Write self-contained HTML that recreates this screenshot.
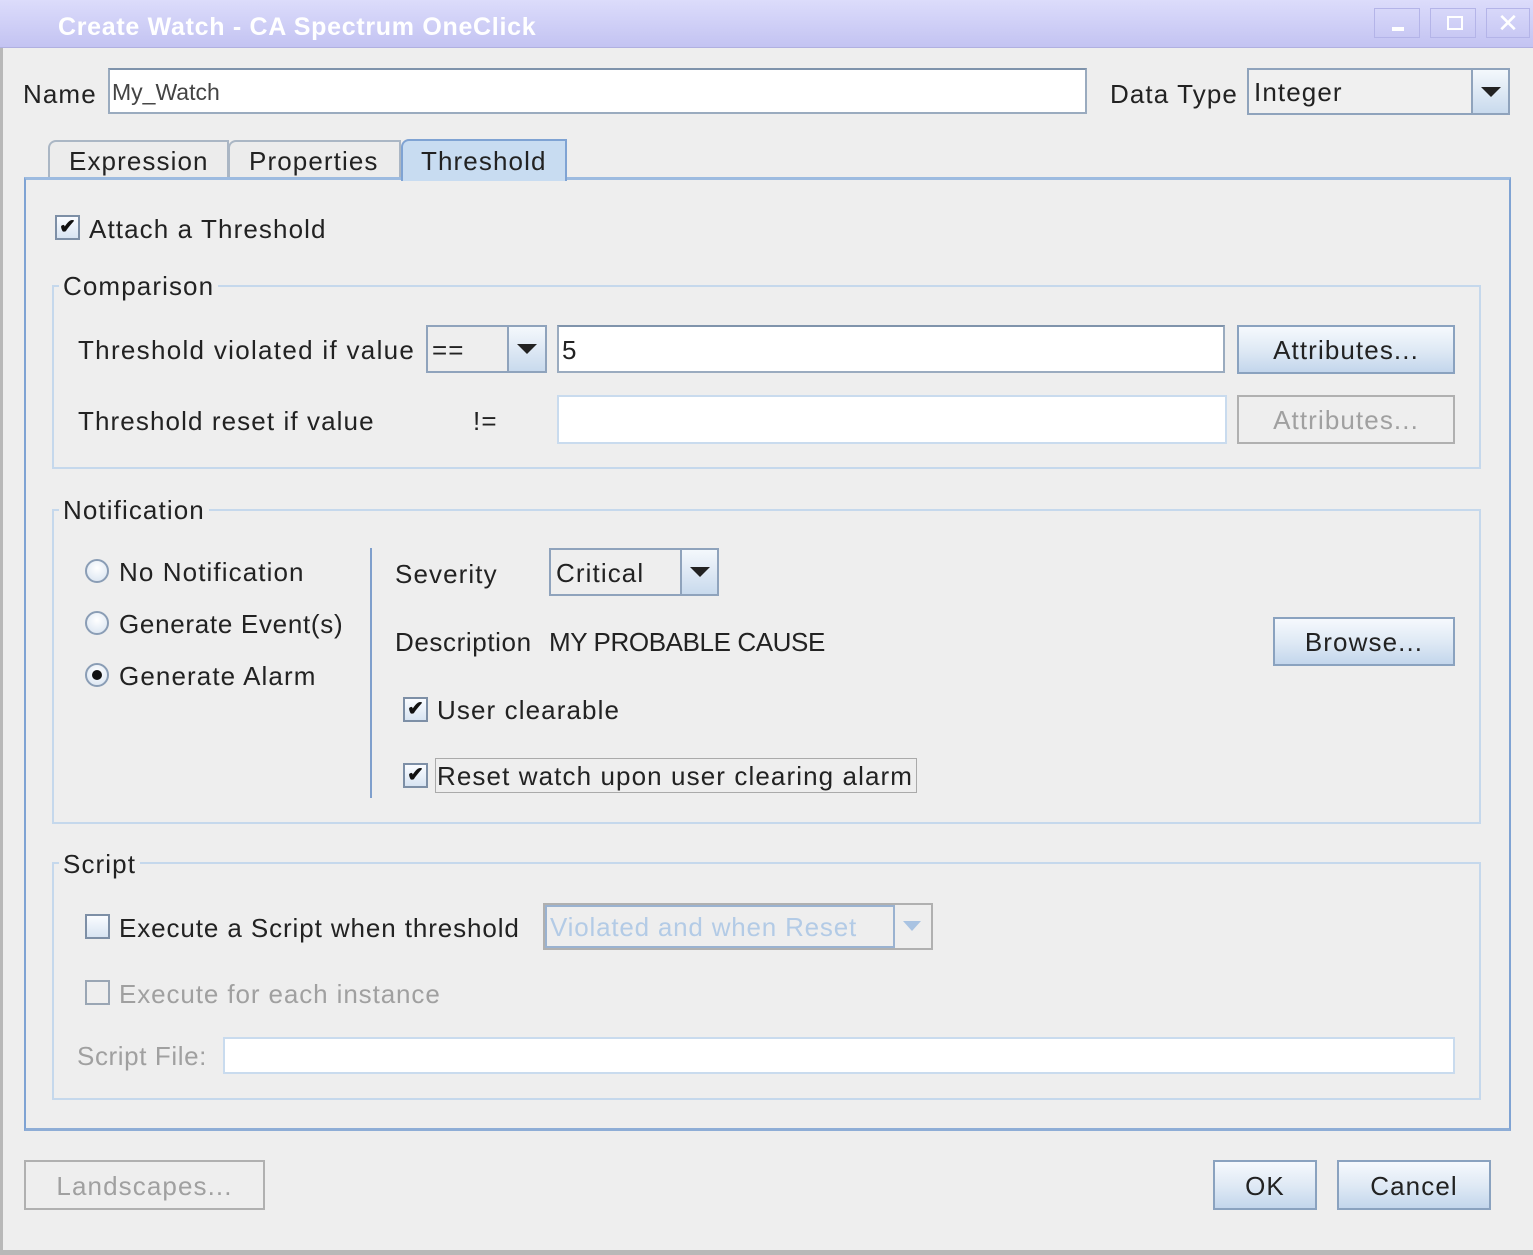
<!DOCTYPE html>
<html><head><style>
*{box-sizing:border-box;margin:0;padding:0}
body{width:1533px;height:1255px;background:#eeeeee;font-family:"Liberation Sans",sans-serif;font-size:26px;letter-spacing:1.1px;color:#222;position:relative;overflow:hidden}
.a{position:absolute}
.t{position:absolute;line-height:30px;white-space:nowrap}
.fld{position:absolute;background:#fff;border:2px solid #9aabbf;border-top-color:#7f93ab}
.btn{position:absolute;border:2px solid #8aa2bf;background:linear-gradient(#f6f9fd,#dde8f4 55%,#c3d6ec);text-align:center}
.dbtn{position:absolute;border:2px solid #b0b0b0;background:#eeeeee;color:#a0a0a0;text-align:center}
.grp{position:absolute;border:2px solid #c5d8ec}
.leg{position:absolute;background:#eeeeee;padding:0 4px;line-height:28px}
.cb{position:absolute;width:25px;height:25px;border:2px solid #7d8fa6;background:linear-gradient(#fafcff,#d8e4f2);font-size:20px;letter-spacing:0;line-height:21px;text-align:center;font-weight:bold;color:#111}
.rd{position:absolute;width:24px;height:24px;border-radius:50%;border:2px solid #8a9db5;background:radial-gradient(circle at 50% 35%,#fff,#d6e2f0)}
.combo{position:absolute;border:2px solid #8fa3bc;background:#eeeeee}
.arr{position:absolute;top:0;bottom:0;border-left:2px solid #8fa3bc;background:linear-gradient(#f4f8fc,#c9daed)}
.arr:after{content:"";position:absolute;left:50%;top:50%;margin-left:-10px;margin-top:-5px;border-left:10px solid transparent;border-right:10px solid transparent;border-top:10px solid #222}
</style></head><body>
<div class="a" style="left:0;top:0;width:1533px;height:48px;background:linear-gradient(#dcdcfb,#c3c3f2);border-bottom:1px solid #b0b0e0"></div>
<div class="t" style="left:58px;top:12px;color:#fff;font-size:25px;font-weight:bold;letter-spacing:0.7px">Create Watch - CA Spectrum OneClick</div>
<div class="a" style="left:1374px;top:8px;width:46px;height:30px;border:1px solid #b4b4e8;"><div class="a" style="left:17px;top:18px;width:12px;height:4px;background:#fff"></div></div>
<div class="a" style="left:1430px;top:8px;width:46px;height:30px;border:1px solid #b4b4e8;"><div class="a" style="left:16px;top:7px;width:16px;height:14px;border:2px solid #fff"></div></div>
<div class="a" style="left:1486px;top:8px;width:44px;height:30px;border:1px solid #b4b4e8;color:#fff;font-size:26px;letter-spacing:0;text-align:center;line-height:28px">✕</div>
<div class="a" style="left:0;top:48px;width:3px;height:1207px;background:#b8b8b8"></div>
<div class="a" style="left:0;top:1250px;width:1533px;height:5px;background:#b8b8b8"></div>

<div class="t" style="left:23px;top:79px">Name</div>
<div class="fld" style="left:108px;top:68px;width:979px;height:46px"><div class="t" style="left:2px;top:7px;color:#444;font-size:23px;letter-spacing:0">My_Watch</div></div>
<div class="t" style="left:1110px;top:79px">Data Type</div>
<div class="combo" style="left:1247px;top:68px;width:263px;height:47px;background:#f0f0f0"><div class="t" style="left:5px;top:7px">Integer</div><div class="arr" style="left:222px;width:37px"></div></div>

<div class="a" style="left:48px;top:140px;width:181px;height:38px;border:2px solid #aab6c4;border-bottom:none;border-radius:8px 0 0 0;background:#ececec"></div>
<div class="t" style="left:69px;top:146px">Expression</div>
<div class="a" style="left:228px;top:140px;width:173px;height:38px;border:2px solid #aab6c4;border-bottom:none;border-radius:8px 0 0 0;background:#ececec"></div>
<div class="t" style="left:249px;top:146px">Properties</div>
<div class="a" style="left:24px;top:177px;width:1487px;height:954px;border:2px solid #7fa3d3;border-top:3px solid #9dbbe0;border-bottom:3px solid #8eadd6"></div>
<div class="a" style="left:401px;top:139px;width:166px;height:42px;border:2px solid #7fa3d3;border-bottom:none;border-radius:8px 0 0 0;background:#c8dcf1"></div>
<div class="t" style="left:421px;top:146px">Threshold</div>

<div class="cb" style="left:55px;top:215px">✔</div>
<div class="t" style="left:89px;top:214px">Attach a Threshold</div>

<div class="grp" style="left:52px;top:285px;width:1429px;height:184px"></div>
<div class="leg" style="left:59px;top:272px">Comparison</div>
<div class="t" style="left:78px;top:335px;letter-spacing:1.3px">Threshold violated if value</div>
<div class="combo" style="left:426px;top:325px;width:121px;height:48px"><div class="t" style="left:4px;top:8px">==</div><div class="arr" style="left:79px;width:38px"></div></div>
<div class="fld" style="left:557px;top:325px;width:668px;height:48px"><div class="t" style="left:3px;top:8px;letter-spacing:0">5</div></div>
<div class="btn" style="left:1237px;top:325px;width:218px;height:49px;line-height:47px">Attributes...</div>
<div class="t" style="left:78px;top:406px">Threshold reset if value</div>
<div class="t" style="left:473px;top:406px">!=</div>
<div class="fld" style="left:557px;top:395px;width:670px;height:49px;border-color:#c9dbee"></div>
<div class="dbtn" style="left:1237px;top:395px;width:218px;height:49px;line-height:47px">Attributes...</div>

<div class="grp" style="left:52px;top:509px;width:1429px;height:315px"></div>
<div class="leg" style="left:59px;top:496px">Notification</div>
<div class="rd" style="left:85px;top:559px"></div><div class="t" style="left:119px;top:557px">No Notification</div>
<div class="rd" style="left:85px;top:611px"></div><div class="t" style="left:119px;top:609px;letter-spacing:0.7px">Generate Event(s)</div>
<div class="rd" style="left:85px;top:663px"><div class="a" style="left:5px;top:5px;width:10px;height:10px;border-radius:50%;background:#111"></div></div><div class="t" style="left:119px;top:661px">Generate Alarm</div>
<div class="a" style="left:370px;top:548px;width:2px;height:250px;background:#7f9fcc"></div>
<div class="t" style="left:395px;top:559px">Severity</div>
<div class="combo" style="left:549px;top:548px;width:170px;height:48px"><div class="t" style="left:5px;top:8px">Critical</div><div class="arr" style="left:129px;width:37px"></div></div>
<div class="t" style="left:395px;top:627px;letter-spacing:0.6px">Description</div>
<div class="t" style="left:549px;top:627px;letter-spacing:-0.4px">MY PROBABLE CAUSE</div>
<div class="btn" style="left:1273px;top:617px;width:182px;height:49px;line-height:47px">Browse...</div>
<div class="cb" style="left:403px;top:697px">✔</div><div class="t" style="left:437px;top:695px">User clearable</div>
<div class="cb" style="left:403px;top:763px">✔</div>
<div class="a" style="left:435px;top:758px;width:482px;height:35px;border:1px solid #aaa"></div>
<div class="t" style="left:437px;top:761px;letter-spacing:1.1px">Reset watch upon user clearing alarm</div>

<div class="grp" style="left:52px;top:862px;width:1429px;height:238px"></div>
<div class="leg" style="left:59px;top:850px">Script</div>
<div class="cb" style="left:85px;top:914px"></div><div class="t" style="left:119px;top:913px;letter-spacing:0.9px">Execute a Script when threshold</div>
<div class="combo" style="left:543px;top:903px;width:390px;height:47px;border-color:#b0b0b0"><div class="a" style="left:0;top:0;width:350px;height:43px;border:2px solid #9ab2d0"></div><div class="t" style="left:5px;top:7px;color:#b3cbe6;letter-spacing:0.8px">Violated and when Reset</div><div class="a" style="left:358px;top:16px;border-left:9px solid transparent;border-right:9px solid transparent;border-top:10px solid #a9c3e2"></div></div>
<div class="cb" style="left:85px;top:980px;background:#eee;border-color:#9aa6b4"></div><div class="t" style="left:119px;top:979px;color:#a0a0a0;letter-spacing:0.9px">Execute for each instance</div>
<div class="t" style="left:77px;top:1041px;color:#a0a0a0;letter-spacing:0.6px">Script File:</div>
<div class="fld" style="left:223px;top:1037px;width:1232px;height:37px;border-color:#c9dbee"></div>

<div class="dbtn" style="left:24px;top:1160px;width:241px;height:50px;line-height:48px">Landscapes...</div>
<div class="btn" style="left:1213px;top:1160px;width:104px;height:50px;line-height:48px">OK</div>
<div class="btn" style="left:1337px;top:1160px;width:154px;height:50px;line-height:48px">Cancel</div>
</body></html>
